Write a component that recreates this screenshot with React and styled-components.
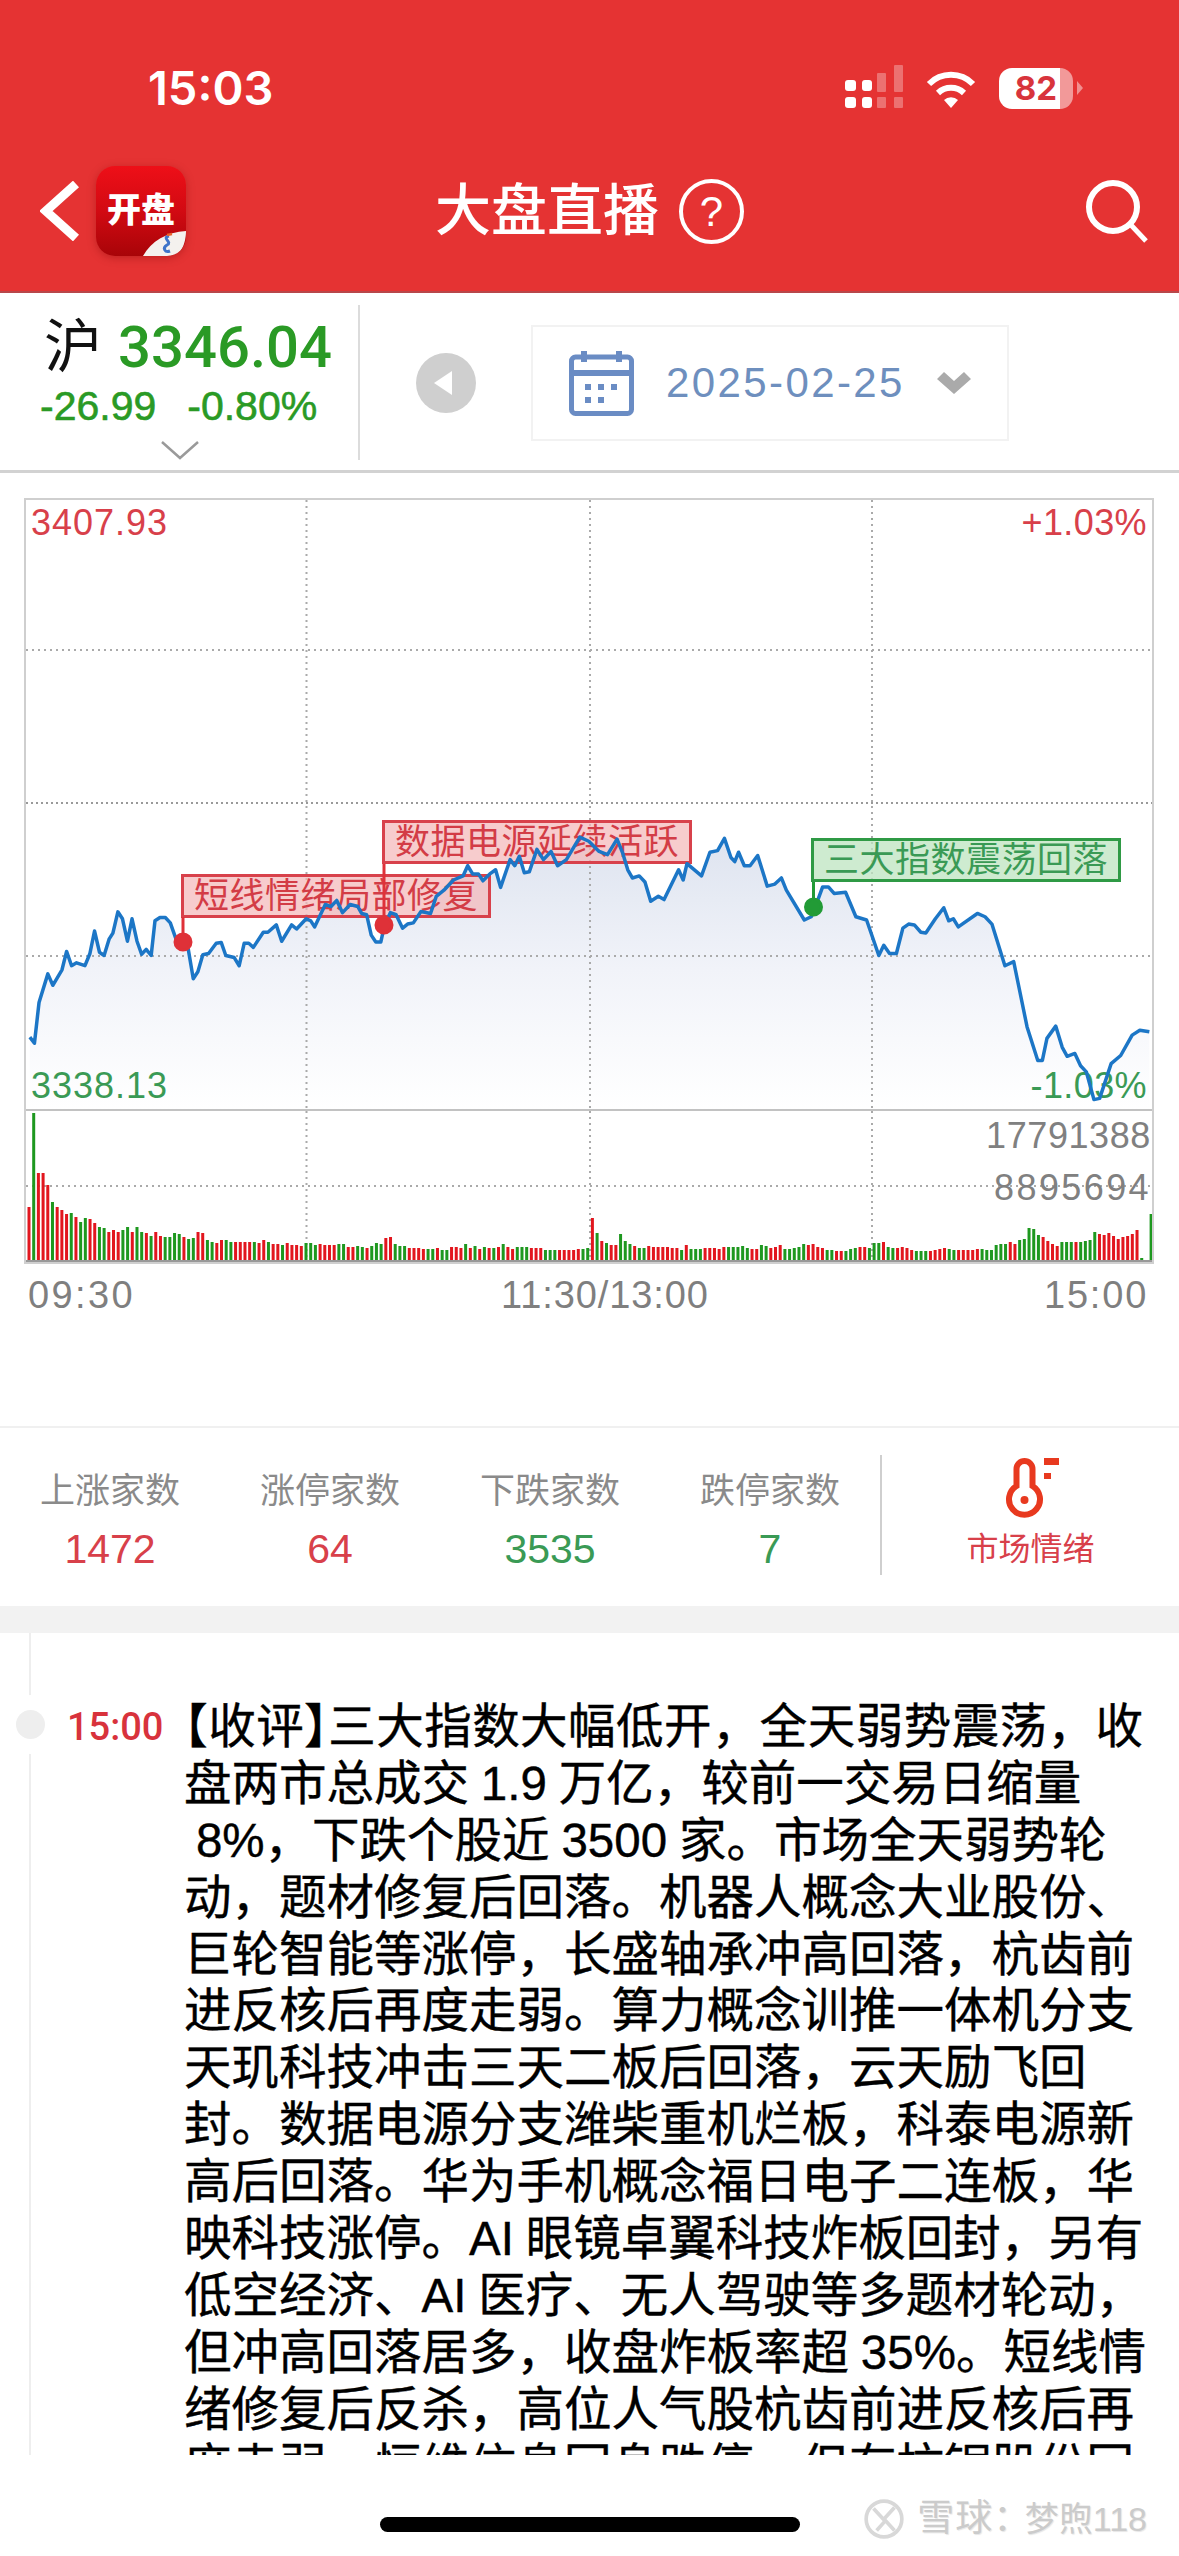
import styled, { createGlobalStyle } from "styled-components";

const RED = "#d8404a";
const GREEN = "#3a9a55";
const SANS = `"Liberation Sans", "Noto Sans CJK SC", sans-serif`;

// trace of the index line, read off two crops of the chart
const LEFT_TRACE = [
  [78,1365],[90,1380],[102,1280],[125,1210],[138,1238],[162,1200],[174,1155],[187,1190],[200,1183],[222,1190],
  [235,1160],[247,1105],[260,1157],[272,1165],[285,1125],[295,1110],[308,1058],[320,1075],[333,1130],[345,1075],
  [358,1130],[370,1162],[382,1150],[395,1165],[405,1080],[418,1072],[432,1072],[445,1085],[460,1125],[480,1130],
  [492,1150],[505,1222],[517,1205],[530,1163],[545,1160],[565,1135],[578,1133],[590,1165],[612,1170],[625,1190],
  [638,1135],[650,1135],[662,1145],[688,1108],[700,1108],[722,1090],[736,1130],[762,1090],[775,1100],[800,1075],
  [812,1080],[822,1095],[850,1040],[865,1045],[880,1030],[895,1060],[915,1040],[935,1045],[945,1062],[958,1065],
  [970,1115],[982,1132],[995,1132],[1005,1090],[1020,1060],[1035,1065],[1052,1098],[1065,1088],[1080,1085],[1100,1057],
  [1125,1062],[1140,1020],[1160,1005],[1185,980],[1210,970],[1222,945],[1235,965],[1250,965],[1262,982],[1280,965],
  [1295,955],[1308,998],[1333,930],[1345,945],[1357,922],[1370,962],[1383,960],[1403,905],[1420,930],[1440,910],
  [1457,945],[1480,930],[1515,875],
].map(([x, y]) => [x / 2.613, 480 + y / 2.45]);

const RIGHT_TRACE = [
  [23,885],[50,910],[72,918],[97,880],[112,915],[125,955],[137,975],[155,970],[170,985],[185,1032],
  [205,1020],[220,1028],[258,955],[270,980],[280,940],[318,970],[340,912],[360,908],[378,878],[395,925],
  [405,935],[415,912],[430,945],[445,945],[465,920],[490,995],[510,990],[527,975],[540,1005],[587,1078],
  [605,1070],[622,1030],[635,997],[650,997],[665,1013],[695,1010],[722,1070],[750,1078],[782,1165],[795,1140],
  [810,1160],[828,1160],[845,1098],[860,1088],[875,1090],[892,1108],[905,1110],[930,1075],[952,1048],[965,1080],
  [977,1075],[990,1095],[1040,1062],[1060,1070],[1078,1088],[1112,1190],[1135,1180],[1170,1340],[1198,1422],[1210,1422],
  [1222,1368],[1245,1338],[1262,1390],[1275,1412],[1295,1405],[1310,1435],[1325,1450],[1345,1518],[1360,1515],[1390,1430],
  [1415,1410],[1445,1360],[1465,1348],[1490,1352],
].map(([x, y]) => [580 + x / 2.617, 480 + y / 2.45]);

const TRACE = [...LEFT_TRACE, ...RIGHT_TRACE];
const LINE_POINTS = TRACE.map((p) => p.join(",")).join(" ");
const FILL_POINTS = `${TRACE[0][0]},1109 ${LINE_POINTS} ${TRACE[TRACE.length - 1][0]},1109`;

// volume bars in px, negative = green
const VOLUME = [
  53,-147,87,87,75,-58,53,50,46,-47,43,-38,-42,41,37,-33,-32,28,30,28,
  -30,-33,28,-33,-28,27,-24,28,24,-23,-23,-27,-26,23,-21,-22,28,27,-20,-18,
  17,20,-20,-18,18,18,18,18,-18,17,20,-18,16,16,-15,17,15,15,14,-17,
  -17,-15,16,15,15,15,-16,-16,13,13,-14,-13,12,-14,-17,-16,22,23,-16,-14,
  -14,12,12,12,11,-11,-11,12,-10,-10,13,13,12,-16,12,-14,11,-13,12,-12,
  13,-16,13,11,-13,-13,-13,12,12,12,-10,-10,-10,10,10,10,10,11,-11,-12,
  42,-27,19,-17,15,15,-26,-19,-16,14,-12,-12,14,13,13,13,13,12,12,-10,
  15,-11,-11,-11,12,12,12,11,13,-13,-13,-13,-14,-12,11,11,-15,-14,12,13,
  15,-11,-11,-12,-13,-16,15,16,13,12,-10,-10,9,9,-9,-11,-12,13,13,-12,
  -17,-17,18,-13,-12,12,13,12,10,-9,-9,-9,9,10,11,12,-11,-10,10,10,
  10,10,11,-11,-10,-10,-15,-16,-16,18,16,-20,-21,-32,-31,-25,23,19,16,14,
  -18,-18,-18,18,-18,-19,-20,-28,26,25,27,24,21,23,24,26,30,-2,0,-46,
];

// \u2005 is the narrow gap iOS leaves between Chinese and latin text
const ARTICLE = [
  "盘两市总成交\u20051.9\u2005万亿，较前一交易日缩量",
  "\u20058%，下跌个股近\u20053500\u2005家。市场全天弱势轮",
  "动，题材修复后回落。机器人概念大业股份、",
  "巨轮智能等涨停，长盛轴承冲高回落，杭齿前",
  "进反核后再度走弱。算力概念训推一体机分支",
  "天玑科技冲击三天二板后回落，云天励飞回",
  "封。数据电源分支潍柴重机烂板，科泰电源新",
  "高后回落。华为手机概念福日电子二连板，华",
  "映科技涨停。AI\u2005眼镜卓翼科技炸板回封，另有",
  "低空经济、AI\u2005医疗、无人驾驶等多题材轮动，",
  "但冲高回落居多，收盘炸板率超\u200535%。短线情",
  "绪修复后反杀，高位人气股杭齿前进反核后再",
  "度走弱，恒维信息回身跌停，但有抗锯股份回",
];

const STATS = [
  { label: "上涨家数", value: "1472", color: RED },
  { label: "涨停家数", value: "64", color: RED },
  { label: "下跌家数", value: "3535", color: GREEN },
  { label: "跌停家数", value: "7", color: GREEN },
];

export default function App() {
  return (
    <Page>
      <GlobalStyle />
      <Header>
        <StatusBar>
          <Clock>15:03</Clock>
          <StatusIcons>
            <svg width="60" height="44" viewBox="0 0 60 44" fill="#fff">
              <rect x="1" y="15" width="11" height="11" rx="3" />
              <rect x="18" y="15" width="10" height="11" rx="3" />
              <rect x="1" y="32" width="11" height="11" rx="3" />
              <rect x="18" y="32" width="10" height="11" rx="3" />
              <g opacity="0.3">
                <rect x="33" y="8" width="9" height="19" rx="1" />
                <rect x="50" y="0" width="9" height="27" rx="1" />
                <rect x="33" y="32" width="9" height="11" rx="1" />
                <rect x="50" y="32" width="9" height="11" rx="1" />
              </g>
            </svg>
            <svg width="50" height="38" viewBox="0 0 50 38" fill="none" stroke="#fff" strokeWidth="6">
              <path d="M3 13 A31 31 0 0 1 47 13" />
              <path d="M12 22 A19 19 0 0 1 38 22" />
              <path d="M18 29 A10 10 0 0 1 32 29 L25 37 Z" fill="#fff" stroke="none" />
            </svg>
            <Battery>82</Battery>
          </StatusIcons>
        </StatusBar>
        <NavBar>
          <NavLeft>
            <svg width="40" height="60" viewBox="0 0 40 60" fill="none" stroke="#fff" strokeWidth="9">
              <path d="M36 3 L6 30 L36 57" />
            </svg>
            <AppLogo>
              开盘
              <LogoCorner viewBox="0 0 43 25">
                <path d="M0 25 C8 10 24 1 43 0 C43 12 38 25 28 25 Z" fill="#f4f1ee" />
                <path d="M26 5 C18 7 30 11 24 14 C19 17 22 22 27 20" fill="none" stroke="#3f74c9" strokeWidth="3" />
                <path d="M24 4 L29 3" stroke="#e8622c" strokeWidth="2.5" />
              </LogoCorner>
            </AppLogo>
          </NavLeft>
          <Title>
            大盘直播
            <HelpMark>?</HelpMark>
          </Title>
          <NavRight>
            <svg width="66" height="66" viewBox="0 0 66 66" fill="none" stroke="#fff" strokeWidth="6">
              <circle cx="29" cy="29" r="24" />
              <path d="M47 47 L62 63" strokeWidth="5" />
            </svg>
          </NavRight>
        </NavBar>
      </Header>

      <IndexBar>
        <IndexPanel>
          <IndexRow>
            <IndexName>沪</IndexName>
            <IndexPrice>3346.04</IndexPrice>
          </IndexRow>
          <ChangeRow>
            <span>-26.99</span>
            <span>-0.80%</span>
          </ChangeRow>
          <ExpandIcon width="40" height="20" viewBox="0 0 40 20" fill="none" stroke="#9a9a9a" strokeWidth="2.5">
            <path d="M2 2 L20 18 L38 2" />
          </ExpandIcon>
        </IndexPanel>
        <PrevDay>
          <svg width="20" height="24" viewBox="0 0 20 24" fill="#fff">
            <path d="M19 0 V24 L1 12 Z" />
          </svg>
        </PrevDay>
        <DateBox>
          <svg width="65" height="65" viewBox="0 0 65 65" fill="none" stroke="#6a8cc4">
            <rect x="2.5" y="6" width="60" height="56.5" rx="4" strokeWidth="5" />
            <path d="M2 22 H63" strokeWidth="6" />
            <path d="M15 0 V11 M50 0 V11" strokeWidth="6" />
            <g fill="#6a8cc4" stroke="none">
              <rect x="16" y="33" width="6" height="6" />
              <rect x="29" y="33" width="6" height="6" />
              <rect x="42" y="33" width="6" height="6" />
              <rect x="16" y="46" width="6" height="6" />
              <rect x="29" y="46" width="6" height="6" />
            </g>
          </svg>
          <DateText>2025-02-25</DateText>
          <svg width="34" height="22" viewBox="0 0 34 22" fill="#aaa">
            <path d="M0 7 L7 0 L17 9 L27 0 L34 7 L17 22 Z" />
          </svg>
        </DateBox>
      </IndexBar>

      <ChartBox>
        <PricePlot>
          <PlotLayer viewBox="26 500 1126 609">
            <defs>
              <linearGradient id="area" gradientUnits="userSpaceOnUse" x1="0" y1="830" x2="0" y2="1109">
                <stop offset="0" stopColor="#dde3ef" />
                <stop offset="0.5" stopColor="#f1f3f9" />
                <stop offset="1" stopColor="#ffffff" />
              </linearGradient>
            </defs>
            <polygon points={FILL_POINTS} fill="url(#area)" />
            <g stroke="#aaa" strokeWidth="2" strokeDasharray="2 4">
              <path d="M26 650 H1152 M26 956 H1152" />
              <path d="M26 803 H1152" stroke="#999" strokeDasharray="2 3" />
              <path d="M306.5 500 V1109 M590 500 V1109 M872 500 V1109" />
            </g>
          </PlotLayer>
          <PriceTop>3407.93</PriceTop>
          <PercentTop>+1.03%</PercentTop>
          <PriceBottom>3338.13</PriceBottom>
          <PercentBottom>-1.03%</PercentBottom>
          <EventTag $left={155} $top={374}>短线情绪局部修复</EventTag>
          <EventTag $left={356} $top={320}>数据电源延续活跃</EventTag>
          <EventTag $left={785} $top={338} $green>三大指数震荡回落</EventTag>
          <PlotLayer viewBox="26 500 1126 609">
            <polyline points={LINE_POINTS} fill="none" stroke="#1c76c6" strokeWidth="3.5" strokeLinejoin="round" />
            <g stroke="#df3138" strokeWidth="3" fill="#df3138">
              <path d="M183 917 V942" />
              <circle cx="183" cy="942" r="8" />
              <path d="M384 864 V925" />
              <circle cx="384" cy="925" r="8" />
            </g>
            <g stroke="#229b36" strokeWidth="3" fill="#229b36">
              <path d="M813.5 882 V907" />
              <circle cx="813.5" cy="907" r="8" />
            </g>
          </PlotLayer>
        </PricePlot>
        <VolumePlot>
          <PlotLayer viewBox="26 1111 1126 149">
            <g stroke="#aaa" strokeWidth="2" strokeDasharray="2 4">
              <path d="M26 1186 H1152" />
              <path d="M306.5 1111 V1260 M590 1111 V1260 M872 1111 V1260" />
            </g>
            {VOLUME.map((v, i) => (
              <rect
                key={i}
                x={27.5 + i * 4.695}
                y={1260 - Math.abs(v)}
                width="3"
                height={Math.abs(v)}
                fill={v < 0 ? "#1e981f" : "#e2161e"}
              />
            ))}
          </PlotLayer>
          <VolumeMax>17791388</VolumeMax>
          <VolumeMid>8895694</VolumeMid>
        </VolumePlot>
      </ChartBox>

      <TimeAxis>
        <AxisTime $spacing={2.4}>09:30</AxisTime>
        <AxisTime $spacing={0.9}>11:30/13:00</AxisTime>
        <AxisTime $spacing={1.8}>15:00</AxisTime>
      </TimeAxis>

      <StatsBar>
        {STATS.map((s) => (
          <StatCell key={s.label}>
            <StatLabel>{s.label}</StatLabel>
            <StatValue $color={s.color}>{s.value}</StatValue>
          </StatCell>
        ))}
        <Mood>
          <svg width="60" height="66" viewBox="0 0 60 66" fill="none" stroke="#e8391f" strokeWidth="6">
            <path d="M15.5 31 V14 a8 8 0 0 1 16 0 V31 A15.5 15.5 0 1 1 15.5 31 Z" />
            <circle cx="23.5" cy="45" r="4" fill="#e8391f" stroke="none" />
            <path d="M43 3 H58 V10 H43 Z M43 18 H50 V24 H43 Z" fill="#e8391f" stroke="none" />
          </svg>
          <MoodLabel>市场情绪</MoodLabel>
        </Mood>
      </StatsBar>

      <Band />

      <Feed>
        <FeedItem>
          <FeedDot />
          <FeedTime>15:00</FeedTime>
          <FeedBody>
            <FeedLine $spacing={0.45}>
              <Bracket>【</Bracket>收评<Bracket>】</Bracket>三大指数大幅低开，全天弱势震荡，收
            </FeedLine>
            {ARTICLE.map((line) => (
              <FeedLine key={line}>{line}</FeedLine>
            ))}
          </FeedBody>
        </FeedItem>
      </Feed>

      <Footer>
        <HomeIndicator />
        <Watermark>
          <svg width="42" height="42" viewBox="0 0 40 40" fill="none" stroke="#d8d8d8" strokeWidth="3.5">
            <circle cx="20" cy="20" r="17" />
            <path d="M10 10 L21 22 L13 31 M30 9 L20 20 L30 31" />
          </svg>
          <WatermarkBrand>雪球<Bracket>：</Bracket></WatermarkBrand>
          <WatermarkUser>梦煦118</WatermarkUser>
        </Watermark>
      </Footer>
    </Page>
  );
}

const GlobalStyle = createGlobalStyle`
  html, body {
    margin: 0;
    padding: 0;
    background: #fff;
  }
  body {
    font-family: ${SANS};
  }
`;

const Page = styled.div`
  width: 1179px;
  height: 2556px;
  overflow: hidden;
  display: flex;
  flex-direction: column;
  background: #fff;
`;

const Header = styled.header`
  flex: none;
  height: 293px;
  background: #e53333;
  color: #fff;
  border-bottom: 2px solid #b8474a;
  box-sizing: border-box;
`;

const StatusBar = styled.div`
  height: 150px;
  padding: 62px 106px 0 148px;
  box-sizing: border-box;
  display: flex;
  justify-content: space-between;
  align-items: flex-start;
`;

const Clock = styled.div`
  font-family: Inter, sans-serif;
  font-weight: 600;
  font-size: 47px;
  line-height: 52px;
`;

const StatusIcons = styled.div`
  display: flex;
  align-items: flex-end;
  gap: 22px;
  margin-top: 3px;
`;

const Battery = styled.div`
  position: relative;
  width: 74px;
  height: 41px;
  margin-left: 1px;
  border-radius: 13px;
  background: linear-gradient(90deg, #fff 82%, rgba(255, 255, 255, 0.5) 82%);
  color: #d8343c;
  font-family: Inter, sans-serif;
  font-weight: 700;
  font-size: 33px;
  line-height: 41px;
  text-align: center;

  &::after {
    content: "";
    position: absolute;
    left: 78px;
    top: 13px;
    border-left: 6px solid rgba(255, 255, 255, 0.45);
    border-top: 7px solid transparent;
    border-bottom: 7px solid transparent;
  }
`;

const NavBar = styled.nav`
  height: 122px;
  display: grid;
  grid-template-columns: 1fr auto 1fr;
  align-items: center;
`;

const NavLeft = styled.div`
  display: flex;
  align-items: center;
  gap: 16px;
  margin-left: 40px;
`;

const NavRight = styled.div`
  display: flex;
  justify-content: flex-end;
  margin-right: 29px;
`;

const AppLogo = styled.div`
  position: relative;
  width: 90px;
  height: 90px;
  border-radius: 19px;
  overflow: hidden;
  background: linear-gradient(180deg, #ee0f18 0%, #d20a12 50%, #a80408 100%);
  box-shadow: 0 2px 8px rgba(120, 0, 0, 0.35);
  font-weight: 900;
  font-size: 34px;
  line-height: 88px;
  text-align: center;
`;

const LogoCorner = styled.svg`
  position: absolute;
  right: 0;
  bottom: 0;
  width: 43px;
  height: 25px;
`;

const Title = styled.h1`
  margin: 0;
  display: flex;
  align-items: center;
  gap: 20px;
  font-size: 56px;
  font-weight: 500;
  line-height: 66px;
`;

const HelpMark = styled.span`
  width: 57px;
  height: 57px;
  border: 4px solid #fff;
  border-radius: 50%;
  font-size: 42px;
  font-weight: 400;
  line-height: 57px;
  text-align: center;
`;

const IndexBar = styled.section`
  flex: none;
  height: 180px;
  display: flex;
  align-items: center;
  border-bottom: 3px solid #d2d2d2;
  box-sizing: border-box;
`;

const IndexPanel = styled.div`
  position: relative;
  width: 360px;
  height: 155px;
  margin-top: 1px;
  border-right: 2px solid #dcdcdc;
  box-sizing: border-box;
  padding-left: 40px;
`;

const IndexRow = styled.div`
  display: flex;
  align-items: center;
  gap: 16px;
  margin-left: 4px;
  height: 80px;
  margin-top: 2px;
`;

const IndexName = styled.span`
  color: #111;
  font-size: 58px;
  line-height: 66px;
`;

const IndexPrice = styled.span`
  color: #2a9a25;
  font-family: Roboto, sans-serif;
  font-size: 58px;
  font-weight: 500;
  line-height: 66px;
`;

const ChangeRow = styled.div`
  display: flex;
  gap: 31px;
  color: #2a9a25;
  font-size: 41px;
  line-height: 46px;
  margin-top: -4px;
  -webkit-text-stroke: 0.6px #2a9a25;
`;

const ExpandIcon = styled.svg`
  position: absolute;
  left: 160px;
  bottom: 0;
`;

const PrevDay = styled.div`
  width: 60px;
  height: 60px;
  margin: 2px 0 0 56px;
  border-radius: 50%;
  background: #cfcfcf;
  display: flex;
  align-items: center;
  justify-content: center;
  padding-right: 6px;
  box-sizing: border-box;
`;

const DateBox = styled.div`
  width: 478px;
  height: 116px;
  margin: 3px 0 0 55px;
  padding-left: 36px;
  border: 2px solid #f2f2f2;
  box-sizing: border-box;
  display: flex;
  align-items: center;
  gap: 32px;
`;

const DateText = styled.span`
  color: #6e8fbe;
  font-size: 42px;
  letter-spacing: 2.4px;
  line-height: 50px;
`;

const ChartBox = styled.section`
  flex: none;
  width: 1130px;
  margin: 25px 0 0 24px;
  border: 2px solid #cfcfcf;
  box-sizing: border-box;
`;

const PricePlot = styled.div`
  position: relative;
  height: 609px;
  border-bottom: 2px solid #c2c2c2;
  box-sizing: content-box;
`;

const VolumePlot = styled.div`
  position: relative;
  height: 149px;
  border-bottom: 2px solid #999;
`;

const PlotLayer = styled.svg`
  position: absolute;
  inset: 0;
  width: 100%;
  height: 100%;
`;

const AxisLabel = styled.span`
  position: absolute;
  font-size: 36px;
  line-height: 36px;
  letter-spacing: 1px;
`;

const PriceTop = styled(AxisLabel)`
  left: 5px;
  top: 5px;
  color: ${RED};
`;

const PercentTop = styled(AxisLabel)`
  right: 5px;
  top: 5px;
  color: ${RED};
  letter-spacing: 0.4px;
`;

const PriceBottom = styled(AxisLabel)`
  left: 5px;
  top: 568px;
  color: ${GREEN};
`;

const PercentBottom = styled(AxisLabel)`
  right: 5px;
  top: 568px;
  color: ${GREEN};
  letter-spacing: 0.4px;
`;

const VolumeMax = styled(AxisLabel)`
  right: 1px;
  top: 7px;
  color: #808080;
  letter-spacing: 0.6px;
`;

const VolumeMid = styled(AxisLabel)`
  right: 1px;
  top: 59px;
  color: #808080;
  letter-spacing: 2.4px;
`;

const EventTag = styled.div`
  position: absolute;
  left: ${(p) => p.$left}px;
  top: ${(p) => p.$top}px;
  width: 310px;
  height: 44px;
  box-sizing: border-box;
  border: 3px solid ${(p) => (p.$green ? "#2f9a45" : "#d8414b")};
  background: ${(p) => (p.$green ? "rgba(190, 228, 192, 0.75)" : "rgba(244, 182, 184, 0.7)")};
  color: ${(p) => (p.$green ? "#3a9a55" : "#d33c46")};
  font-size: 35px;
  line-height: 38px;
  letter-spacing: 0.5px;
  text-align: center;
  white-space: nowrap;
`;

const TimeAxis = styled.div`
  flex: none;
  display: grid;
  grid-template-columns: 473px 543px 1fr;
  padding: 9px 0 0 28px;
  color: #7f7f7f;
  font-size: 38px;
  line-height: 44px;
`;

const AxisTime = styled.span`
  letter-spacing: ${(p) => p.$spacing}px;
`;

const StatsBar = styled.section`
  flex: none;
  height: 180px;
  margin-top: 109px;
  border-top: 2px solid #f0f0f0;
  box-sizing: border-box;
  display: flex;
  align-items: center;
`;

const StatCell = styled.div`
  width: 220px;
  display: flex;
  flex-direction: column;
  align-items: center;
  gap: 14px;
  margin-top: 5px;
`;

const StatLabel = styled.span`
  color: #8a8a8a;
  font-size: 35px;
  line-height: 44px;
`;

const StatValue = styled.span`
  color: ${(p) => p.$color};
  font-size: 41px;
  line-height: 44px;
`;

const Mood = styled.div`
  flex: 1;
  height: 120px;
  border-left: 2px solid #cfcfcf;
  margin-top: -4px;
  display: flex;
  flex-direction: column;
  align-items: center;
  gap: 8px;
`;

const MoodLabel = styled.span`
  color: ${RED};
  font-size: 32px;
  line-height: 40px;
`;

const Band = styled.div`
  flex: none;
  height: 27px;
  background: #f2f2f2;
`;

const Feed = styled.section`
  flex: none;
  position: relative;
  height: 822px;
  overflow: hidden;
  padding: 66px 0 0 16px;
  box-sizing: border-box;

  &::before {
    content: "";
    position: absolute;
    left: 29px;
    top: 0;
    bottom: 0;
    width: 2px;
    background: #eee;
  }
`;

const FeedItem = styled.article`
  position: relative;
  display: flex;
  align-items: flex-start;
`;

const FeedDot = styled.span`
  flex: none;
  width: 29px;
  height: 29px;
  margin-top: 11px;
  border-radius: 50%;
  background: #eee;
  box-shadow: 0 0 0 15px #fff;
`;

const FeedTime = styled.time`
  flex: none;
  width: 117px;
  margin-left: 22px;
  color: #d8323c;
  font-family: Roboto, sans-serif;
  font-weight: 500;
  font-size: 38px;
  line-height: 57px;
`;

const FeedBody = styled.div`
  color: #000;
  font-size: 47.5px;
  font-weight: 400;
  -webkit-text-stroke: 0.4px #000;
`;

const FeedLine = styled.div`
  height: 56.9px;
  line-height: 56.9px;
  white-space: pre;
  letter-spacing: ${(p) => p.$spacing || 0}px;
`;

const Bracket = styled.span`
  font-feature-settings: "halt";
`;

const Footer = styled.footer`
  position: relative;
  flex: 1;
  display: flex;
  justify-content: center;
  padding-top: 62px;
  box-sizing: border-box;
`;

const HomeIndicator = styled.div`
  width: 420px;
  height: 15px;
  border-radius: 8px;
  background: #000;
`;

const Watermark = styled.div`
  position: absolute;
  right: 32px;
  top: 42px;
  display: flex;
  align-items: center;
  gap: 12px;
  color: #cbcbcb;
  line-height: 44px;
  text-shadow: 1px 1px 1px #e6e6e6;
`;

const WatermarkBrand = styled.span`
  font-size: 37px;
  letter-spacing: 1px;
`;

const WatermarkUser = styled.span`
  font-size: 34px;
`;
